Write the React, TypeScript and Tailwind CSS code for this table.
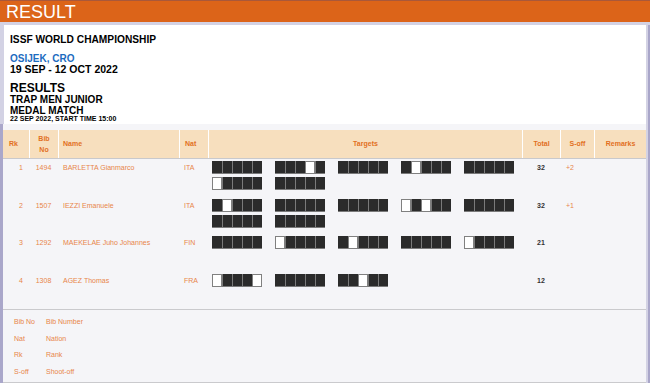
import React from "react";

type Row = {
  rk: string;
  bib: string;
  name: string;
  nat: string;
  groups: string[];
  total: string;
  soff: string;
};

const rows: Row[] = [
  {
    rk: "1",
    bib: "1494",
    name: "BARLETTA Gianmarco",
    nat: "ITA",
    groups: ["11111", "11101", "11111", "10111", "11111", "01111", "11111"],
    total: "32",
    soff: "+2",
  },
  {
    rk: "2",
    bib: "1507",
    name: "IEZZI Emanuele",
    nat: "ITA",
    groups: ["10111", "11111", "11111", "01011", "11111", "11111", "11111"],
    total: "32",
    soff: "+1",
  },
  {
    rk: "3",
    bib: "1292",
    name: "MAEKELAE Juho Johannes",
    nat: "FIN",
    groups: ["11111", "01111", "10111", "11111", "01111"],
    total: "21",
    soff: "",
  },
  {
    rk: "4",
    bib: "1308",
    name: "AGEZ Thomas",
    nat: "FRA",
    groups: ["01110", "11111", "11011"],
    total: "12",
    soff: "",
  },
];

const legend: [string, string][] = [
  ["Bib No", "Bib Number"],
  ["Nat", "Nation"],
  ["Rk", "Rank"],
  ["S-off", "Shoot-off"],
];

function Group({ g }: { g: string }) {
  return (
    <div className="flex h-[13px] w-[50px]">
      {g.split("").map((c, i) =>
        c === "1" ? (
          <div
            key={i}
            className="h-[13px] w-[10px] border-l border-b border-[#7a7a7a] bg-[#2b2b2b] first:border-l-0"
          />
        ) : (
          <div
            key={i}
            className="h-[13px] w-[10px] border border-[#808080] bg-white"
          />
        )
      )}
    </div>
  );
}

const cols = "grid grid-cols-[26px_29px_121px_29px_314px_38px_34px_52px]";

export default function App() {
  return (
    <div
      className="flex h-[383px] w-[650px] flex-col overflow-hidden bg-[#d3d2e4]"
      style={{ fontFamily: '"Liberation Sans", Arial, sans-serif' }}
    >
      <div className="flex h-[22px] shrink-0 items-center border-t border-[#a9583a] bg-[#dc6419] pl-[6px]">
        <span className="text-[18px] leading-[20px] text-white">RESULT</span>
      </div>
      <div className="h-[3px] shrink-0" />
      <div className="flex min-h-0 flex-1">
        <div className="flex w-[646px] flex-col">
          {/* white header */}
          <div className="ml-[4px] h-[99px] shrink-0 bg-white pl-[6px] pt-[8.5px] font-bold text-black">
            <div className="text-[10.2px] leading-[12px]">ISSF WORLD CHAMPIONSHIP</div>
            <div className="mt-[8px] text-[10px] leading-[10px] text-[#1d6cc0]">OSIJEK, CRO</div>
            <div className="text-[10.5px] leading-[10px]">19 SEP - 12 OCT 2022</div>
            <div className="mt-[8px] text-[12px] leading-[12px]">RESULTS</div>
            <div className="text-[10px] leading-[11px]">TRAP MEN JUNIOR</div>
            <div className="text-[10px] leading-[11px]">MEDAL MATCH</div>
            <div className="text-[7px] leading-[6px]">22 SEP 2022, START TIME 15:00</div>
          </div>
          {/* gray area */}
          <div className="flex flex-1 flex-col border-l-[3px] border-[#aaa7ca] bg-[#f5f5f8] pt-[6px]">
            <div
              className={`${cols} h-[29px] border-b border-[#c9c9cc] bg-[#f7dfbe] text-[7px] font-bold text-[#e2701f]`}
            >
              <div className="flex items-center pl-[6px]">Rk</div>
              <div className="flex flex-col items-center justify-center border-l border-white leading-[11px]">
                <span>Bib</span>
                <span>No</span>
              </div>
              <div className="flex items-center border-l border-white pl-[4px]">Name</div>
              <div className="flex items-center border-l border-white pl-[5px]">Nat</div>
              <div className="flex items-center justify-center border-l border-white">Targets</div>
              <div className="flex items-center justify-center border-l border-white">Total</div>
              <div className="flex items-center justify-center border-l border-white">S-off</div>
              <div className="flex items-center justify-center border-l border-white">Remarks</div>
            </div>
            <div className="h-[150px] shrink-0">
              {rows.map((r) => (
                <div
                  key={r.rk}
                  className={`${cols} h-[37.5px] pt-[2px] text-[7px] leading-[13px] text-[#e8854a]`}
                >
                  <div className="pr-[6px] text-right">{r.rk}</div>
                  <div className="text-center">{r.bib}</div>
                  <div className="pl-[5px]">{r.name}</div>
                  <div className="pl-[5px]">{r.nat}</div>
                  <div className="flex flex-wrap content-start gap-x-[13px] gap-y-[3px] pl-[4px]">
                    {r.groups.map((g, i) => (
                      <Group key={i} g={g} />
                    ))}
                  </div>
                  <div className="text-center font-bold text-[#333333]">{r.total}</div>
                  <div className="pl-[6px]">{r.soff}</div>
                  <div />
                </div>
              ))}
            </div>
            <div className="flex-1 border-t border-[#cacacd] pt-[4px]">
              {legend.map(([a, b]) => (
                <div key={a} className="flex text-[7px] leading-[16.7px] text-[#e8854a]">
                  <span className="w-[43px] pl-[11px]">{a}</span>
                  <span>{b}</span>
                </div>
              ))}
            </div>
            <div className="h-[1px] shrink-0 bg-[#cacacd]" />
          </div>
        </div>
        <div className="w-[4px] border-r-2 border-[#a9a6c9] bg-[#d3d2e4]" />
      </div>
    </div>
  );
}
